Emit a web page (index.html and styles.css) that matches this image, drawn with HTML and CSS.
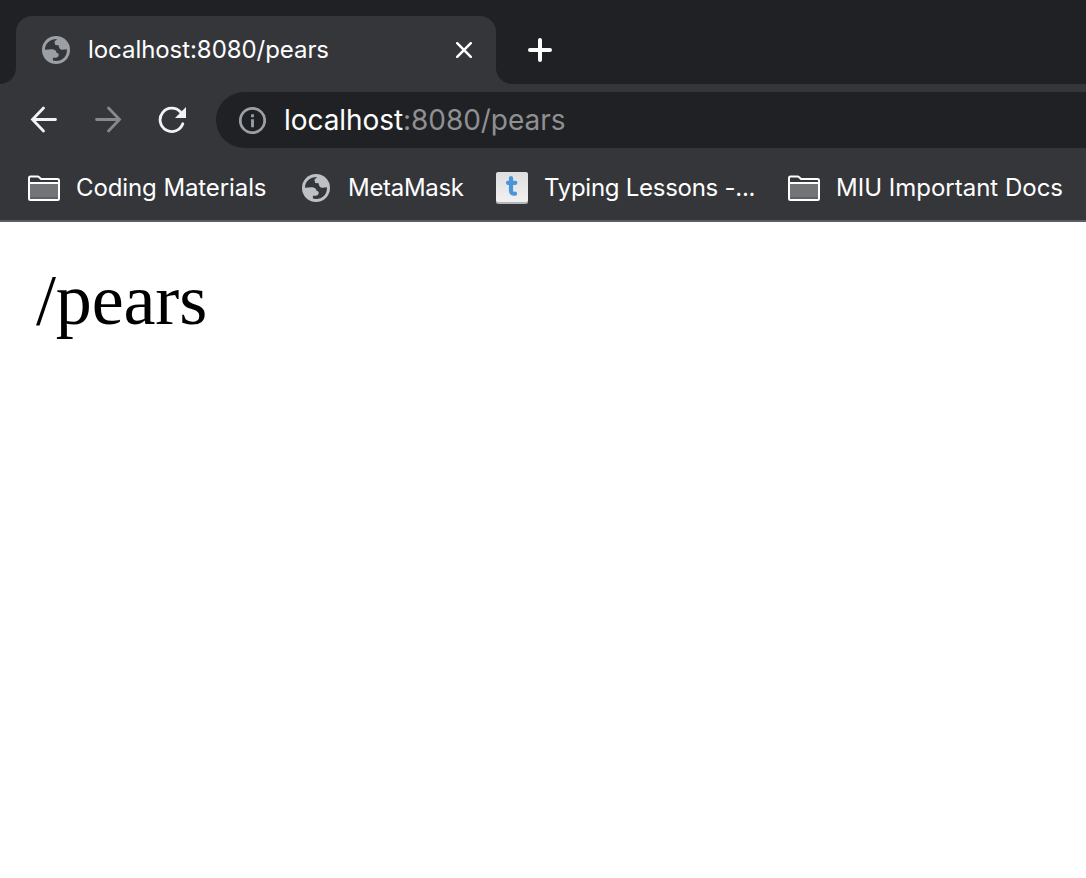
FILE: index.html
```html
<!DOCTYPE html>
<html lang="en">
<head>
<meta charset="utf-8">
<title>localhost:8080/pears</title>
<link rel="stylesheet" href="styles.css">
</head>
<body>
<svg width="0" height="0" class="defs">
  <symbol id="globe" viewBox="0 0 28 28">
    <circle cx="14" cy="14" r="14" fill="currentColor"/>
    <path class="land" d="M2.900 13.700C3.200 7.400 8 3 15 3c-.2 1.300-2.500 1.400-2.500 3.200 0 1.200 1 1.500.6 2.800l3.500.2c.2 2.300 1.100 4 3.100 4.500 1.900.5 3.400-.5 5.200-.4C25.500 20 20.600 25.100 14 25.100c-1.300 0-2.300-.2-3.100-.5v-2.900h2.700c1.700 0 3.100-1.300 3.100-2.800 0-1.300-.7-2-2.200-2.200-.2-1.700-1.200-2.700-3.100-3.100-2.500-.6-5.400.1-8.500.1z"/>
  </symbol>
  <symbol id="folder" viewBox="0 0 32 26">
    <path d="M2 8h28v16H2z" fill="#737477"/>
    <path d="M2 22h28v2H2z" fill="#606164"/>
    <path d="M1 8V3q0-1.500 1.500-1.500h7q1 0 1.700.8L13 4h16.500q1.500 0 1.500 1.500v18q0 1.500-1.500 1.500h-27Q1 25 1 23.500V8h30" fill="none" stroke="#fff" stroke-width="2"/>
  </symbol>
</svg>
<header class="browser">
  <div class="tabstrip">
    <div class="tab">
      <svg class="globe tab-globe"><use href="#globe"/></svg>
      <span class="tab-title">localhost:8080/pears</span>
      <svg class="close" viewBox="0 0 16 16"><path d="M1.200 1.200 14.800 14.800M14.800 1.200 1.200 14.800"/></svg>
    </div>
    <svg class="plus" viewBox="0 0 24 24"><path d="M12 2v20M2 12h20"/></svg>
  </div>
  <div class="toolbar">
    <svg class="nav back" viewBox="0 0 28 28"><path d="M25.500 13.500H3M13.500 2 2.500 13.500l11 11.500"/></svg>
    <svg class="nav forward" viewBox="0 0 28 28"><path d="M2.500 13.500H25M14.500 2l11 11.500-11 11.500"/></svg>
    <svg class="nav reload" viewBox="0 0 28 28"><path d="M24.800 17.800A11.700 11.700 0 1 1 22.500 6"/><path class="head" d="M28 1v11H17z"/></svg>
    <div class="omnibox">
      <svg class="info" viewBox="0 0 28 28"><circle cx="14.500" cy="14.500" r="12.200"/><path d="M14.500 13.200v8M14.500 8.200v3"/></svg>
      <span class="url"><span class="host">localhost</span>:8080/pears</span>
    </div>
  </div>
  <nav class="bookmarks">
    <svg class="folder"><use href="#folder"/></svg><span class="label coding">Coding Materials</span>
    <svg class="globe"><use href="#globe"/></svg><span class="label metamask">MetaMask</span>
    <svg class="typing-icon" viewBox="0 0 32 32">
      <defs><linearGradient id="key" x2="0" y2="1"><stop stop-color="#dedede"/><stop offset="1" stop-color="#f1f1f1"/></linearGradient></defs>
      <rect width="32" height="32" rx="2.500" fill="#b4b5b5"/><rect width="32" height="30" rx="2.500" fill="url(#key)"/>
      <path d="M15 6v12.500q0 3.500 4 3.200M12 10.800h7.300" fill="none" stroke="#4a94d8" stroke-width="4.200" stroke-linecap="round"/>
    </svg><span class="label typing">Typing Lessons -...</span>
    <svg class="folder"><use href="#folder"/></svg><span class="label docs">MIU Important Docs</span>
  </nav>
</header>
<main class="page">/pears</main>
</body>
</html>
```
FILE: styles.css
```css
* { box-sizing: border-box; }
body { margin: 0; background: #fff; overflow: hidden; }
svg { flex: none; display: block; }
.defs { position: absolute; }
.browser {
  height: 222px;
  background: #35363a;
  border-bottom: 2px solid #5d5e62;
  color: #fff;
  font-family: Inter, "Liberation Sans", sans-serif;
  white-space: nowrap;
}
.tabstrip {
  display: flex;
  height: 84px;
  padding: 16px 0 0 16px;
  background: #202124;
}
.tab {
  position: relative;
  display: flex;
  align-items: center;
  width: 480px;
  height: 68px;
  padding-left: 26px;
  border-radius: 16px 16px 0 0;
  background: #35363a;
}
.tab::before, .tab::after {
  content: "";
  position: absolute;
  bottom: 0;
  width: 16px;
  height: 16px;
}
.tab::before { left: -16px; background: radial-gradient(circle at 0 0, #202124 15.500px, #35363a 16.500px); }
.tab::after { right: -16px; background: radial-gradient(circle at 100% 0, #202124 15.500px, #35363a 16.500px); }
.globe { width: 28px; height: 28px; color: #bdc1c6; }
.tab-globe { color: #9aa0a6; }
.land { fill: #35363a; }
.tab-title { width: 368px; margin-left: 18px; padding-bottom: 2px; font-size: 24px; letter-spacing: -0.06px; }
.close { width: 16px; height: 16px; fill: none; stroke: #fff; stroke-width: 2.500; stroke-linecap: round; }
.plus { width: 24px; height: 24px; margin: 22px 0 0 32px; fill: none; stroke: #fff; stroke-width: 4; stroke-linecap: round; }
.toolbar { display: flex; align-items: center; height: 72px; padding-left: 30px; }
.nav { width: 28px; height: 28px; margin-right: 36px; fill: none; stroke: #f1f3f4; stroke-width: 2.800; stroke-linecap: round; }
.forward { stroke: #88898b; }
.reload { margin-right: 30px; }
.head { fill: #f1f3f4; stroke: none; }
.omnibox {
  display: flex;
  flex: 1;
  align-items: center;
  height: 56px;
  padding-left: 22px;
  border-radius: 28px 0 0 28px;
  background: #202124;
}
.info { width: 28px; height: 28px; fill: none; stroke: #9aa0a6; stroke-width: 2.800; }
.url { margin-left: 18px; font-size: 28px; color: #8f9092; letter-spacing: -0.06px; }
.host { color: #fff; }
.bookmarks { display: flex; align-items: center; height: 64px; padding-left: 28px; font-size: 24px; }
.folder { width: 32px; height: 26px; }
.label { flex: none; margin-left: 16px; padding-bottom: 2px; }
.coding { width: 226px; letter-spacing: -0.1px; }
.metamask { width: 148px; margin-left: 18px; letter-spacing: -0.3px; }
.typing-icon { width: 32px; height: 32px; }
.typing { width: 244px; letter-spacing: -0.27px; }
.page { padding: 37px 36px; font: 72px "Liberation Serif", serif; line-height: 83px; letter-spacing: -0.15px; }
```
